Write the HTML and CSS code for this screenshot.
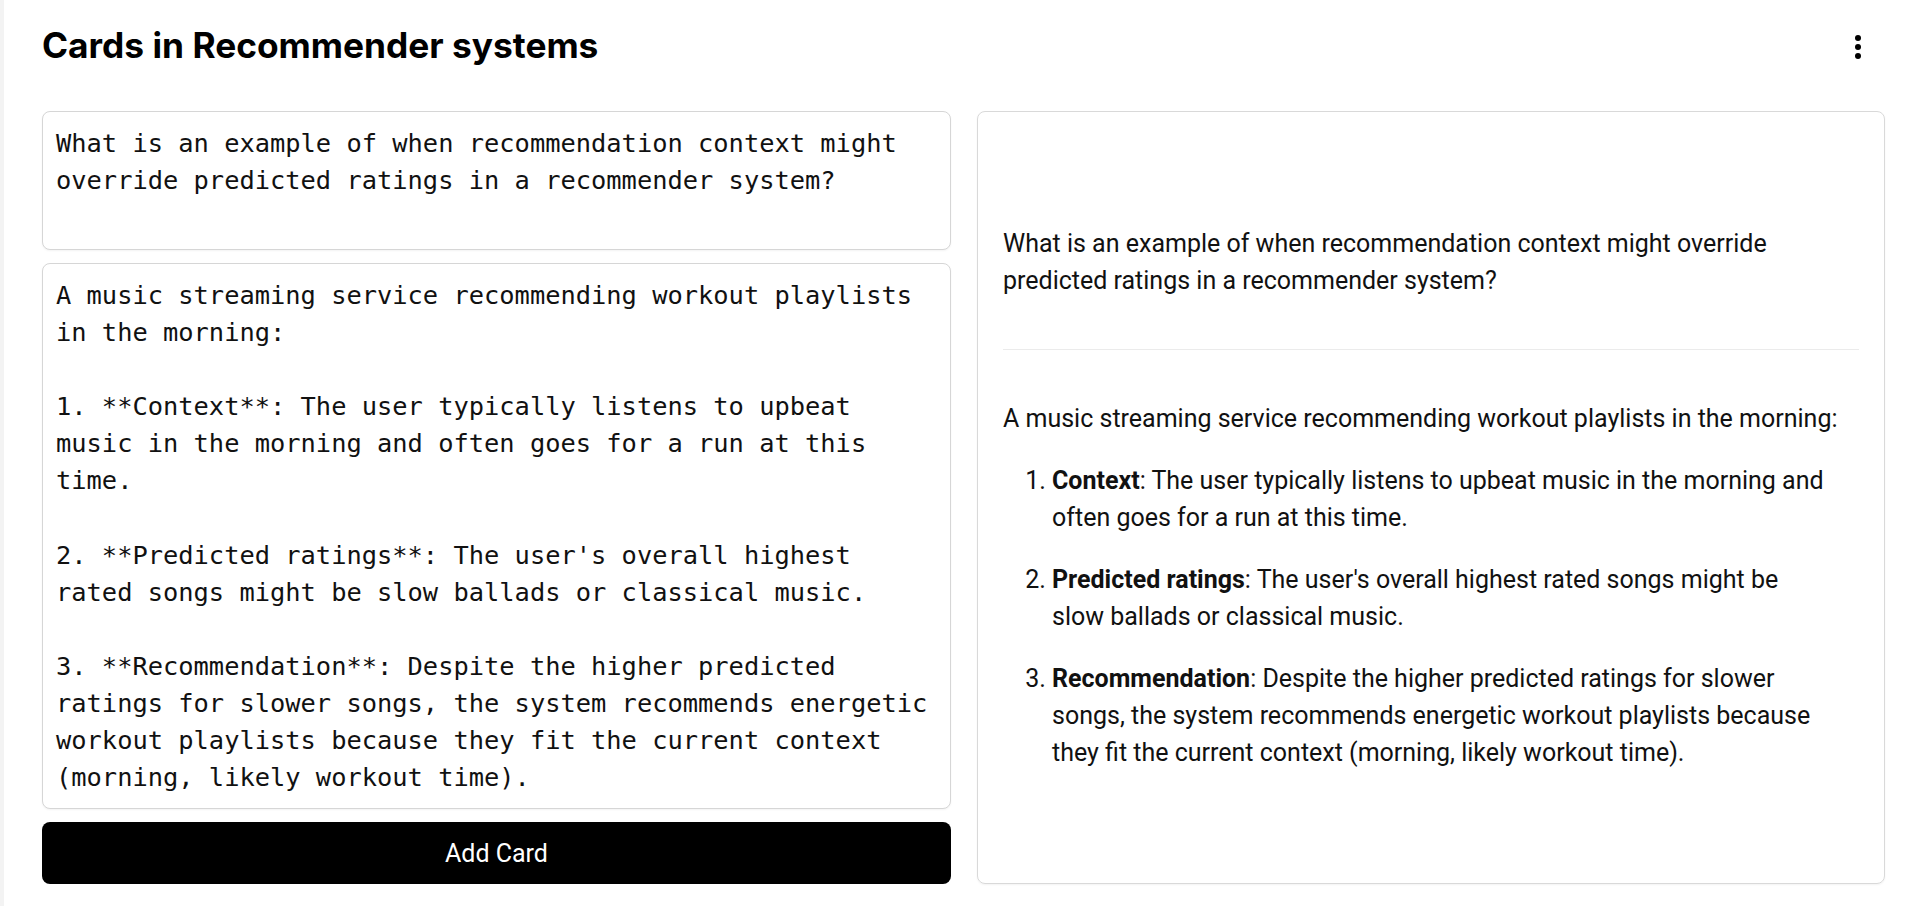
FILE: index.html
```html
<!DOCTYPE html>
<html lang="en">
<head>
  <meta charset="UTF-8" />
  <title>Cards in Recommender systems</title>
  <link rel="stylesheet" href="styles.css">
</head>
<body>
  <div class="page">
    <div class="header">
      <h1>Cards in Recommender systems</h1>
      <button class="menu-btn" aria-label="More">
        <svg width="8" height="26" viewBox="0 0 8 26"><circle cx="4" cy="4" r="3"/><circle cx="4" cy="13" r="3"/><circle cx="4" cy="22" r="3"/></svg>
      </button>
    </div>

    <div class="columns">
      <div class="editor">
        <textarea class="front-input">What is an example of when recommendation context might override predicted ratings in a recommender system?</textarea>
        <textarea class="back-input">A music streaming service recommending workout playlists in the morning:

1. **Context**: The user typically listens to upbeat music in the morning and often goes for a run at this time.

2. **Predicted ratings**: The user's overall highest rated songs might be slow ballads or classical music.

3. **Recommendation**: Despite the higher predicted ratings for slower songs, the system recommends energetic workout playlists because they fit the current context (morning, likely workout time).</textarea>
        <button class="add-btn">Add Card</button>
      </div>

      <div class="preview">
        <div class="front">
          <p>What is an example of when recommendation context might override predicted ratings in a recommender system?</p>
        </div>
        <hr>
        <div class="back">
          <p>A music streaming service recommending workout playlists in the morning:</p>
          <ol>
            <li><strong>Context</strong>: The user typically listens to upbeat music in the morning and often goes for a run at this time.</li>
            <li><strong>Predicted ratings</strong>: The user's overall highest rated songs might be slow ballads or classical music.</li>
            <li><strong>Recommendation</strong>: Despite the higher predicted ratings for slower songs, the system recommends energetic workout playlists because they fit the current context (morning, likely workout time).</li>
          </ol>
        </div>
      </div>
    </div>
  </div>
</body>
</html>
```

FILE: styles.css
```css
* {
  box-sizing: border-box;
}
body {
  margin: 0;
  font-family: Roboto, "Liberation Sans", sans-serif;
  color: #111;
  background: #fff;
}
.page {
  border-left: 4px solid #f3f3f3;
  padding: 21px 35px 22px 38px;
  min-height: 906px;
}
.header {
  display: flex;
  align-items: center;
  justify-content: space-between;
  height: 48px;
  margin-bottom: 42px;
}
h1 {
  margin: 0;
  font-family: Inter, sans-serif;
  font-size: 35.3px;
  font-weight: 700;
  color: #000;
}
.menu-btn {
  width: 40px;
  height: 40px;
  margin-right: 7px;
  margin-top: 3px;
  border: none;
  background: none;
  padding: 0;
  display: flex;
  align-items: center;
  justify-content: center;
}
.menu-btn svg {
  fill: #000;
}
.columns {
  display: grid;
  grid-template-columns: 909px 908px;
  gap: 26px;
}
.editor {
  display: flex;
  flex-direction: column;
  gap: 13px;
}
textarea {
  display: block;
  width: 100%;
  font-family: "DejaVu Sans Mono", monospace;
  font-size: 25.4px;
  line-height: 37.1px;
  color: #111;
  padding: 13px 13px 12px;
  border: 1px solid #d6d6d6;
  border-radius: 8px;
  box-shadow: 0 1px 2px rgba(0, 0, 0, 0.05);
  resize: none;
  overflow: hidden;
}
.front-input {
  height: 139px;
}
.back-input {
  height: 546px;
}
.add-btn {
  height: 62px;
  border: none;
  border-radius: 8px;
  background: #000;
  color: #fff;
  font-family: Roboto, sans-serif;
  font-size: 25px;
}
.preview {
  border: 1px solid #d9d9d9;
  border-radius: 8px;
  padding: 0 25px;
  box-shadow: 0 1px 2px rgba(0, 0, 0, 0.05);
  font-size: 25px;
  line-height: 37px;
  color: #111;
}
.front p {
  margin: 113px 0 0;
}
hr {
  margin: 50px 0;
  border: none;
  border-top: 1px solid #ebebeb;
}
.back p {
  margin: 0 0 25px;
}
ol {
  margin: 0;
  padding-left: 49px;
}
li {
  margin-bottom: 25px;
  padding-right: 29px;
}
strong {
  font-weight: 700;
}
```
